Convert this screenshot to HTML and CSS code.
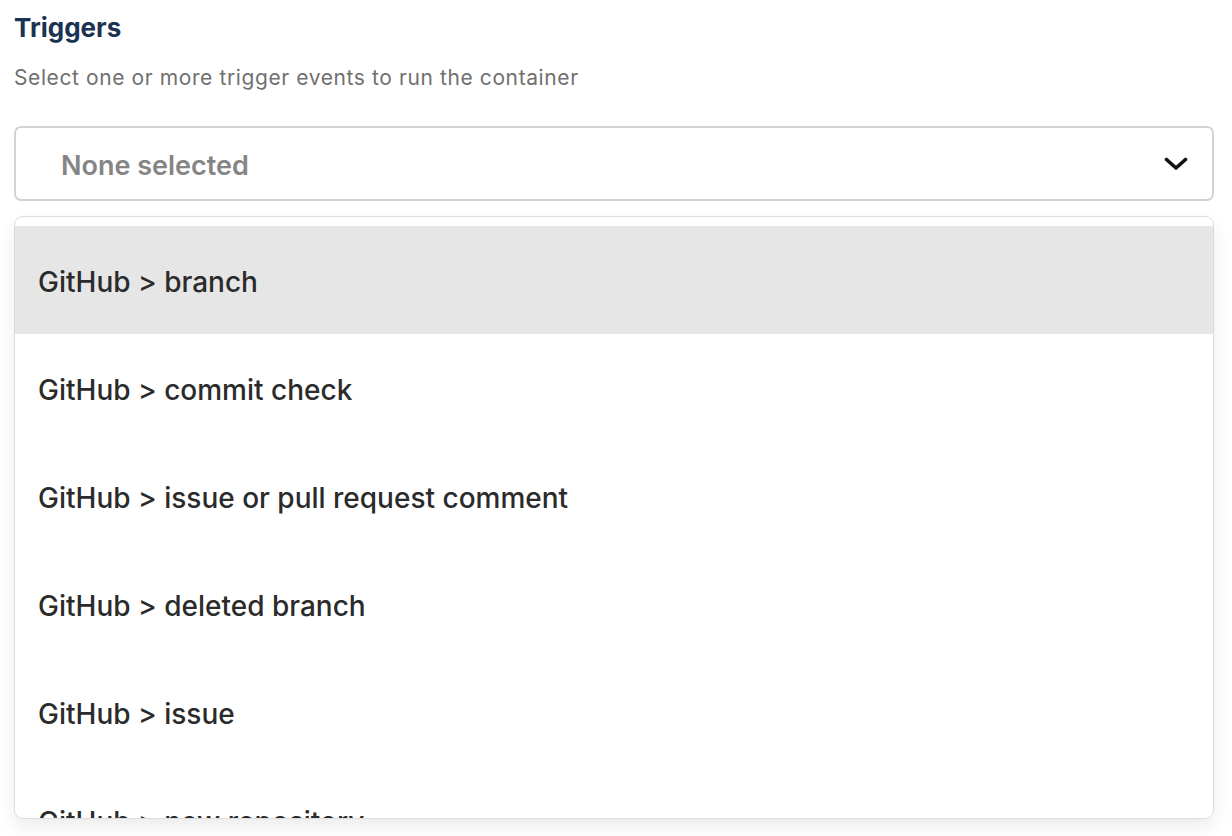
FILE: index.html
```html
<!DOCTYPE html>
<html>
<head>
<meta charset="utf-8">
<link rel="stylesheet" href="styles.css">
</head>
<body>
<div class="field">
  <h2 class="title">Triggers</h2>
  <p class="hint">Select one or more trigger events to run the container</p>
  <div class="select">
    <span class="placeholder">None selected</span>
    <svg class="chevron" width="24" height="16" viewBox="0 0 24 16"><path d="M2.5 3.5 L12 12 L21.5 3.5" fill="none" stroke="#111" stroke-width="3.6" stroke-linecap="round" stroke-linejoin="round"/></svg>
  </div>
  <div class="menu">
    <ul class="options">
      <li class="option active">GitHub &gt; branch</li>
      <li class="option">GitHub &gt; commit check</li>
      <li class="option">GitHub &gt; issue or pull request comment</li>
      <li class="option">GitHub &gt; deleted branch</li>
      <li class="option">GitHub &gt; issue</li>
      <li class="option">GitHub &gt; new repository</li>
    </ul>
  </div>
</div>
</body>
</html>
```
FILE: styles.css
```css
html, body {
  margin: 0;
  padding: 0;
  background: #fff;
}
body {
  font-family: Inter, "Noto Sans", sans-serif;
  width: 1232px;
  height: 836px;
  overflow: hidden;
}
.field {
  padding: 12px 18px 0 14px;
}
.title {
  margin: 0;
  font-size: 26px;
  font-weight: 700;
  color: #1b3352;
  line-height: 32px;
}
.hint {
  margin: 20px 0 0;
  font-size: 21px;
  letter-spacing: 0.6px;
  color: #707070;
  line-height: 28px;
}
.select {
  margin-top: 34px;
  height: 71px;
  border: 2px solid #d3d3d3;
  border-radius: 7px;
  display: flex;
  align-items: center;
  justify-content: space-between;
  padding: 0 24px 0 45px;
}
.placeholder {
  font-size: 27px;
  font-weight: 600;
  color: #858585;
  padding-top: 4px;
}
.chevron {
  display: block;
}
.menu {
  margin-top: 15px;
  height: 601px;
  border: 1px solid #dcdcdc;
  border-radius: 9px;
  box-shadow: 0 8px 18px rgba(0,0,0,0.08);
  overflow: hidden;
}
.options {
  list-style: none;
  margin: 0;
  padding: 9px 0 0;
}
.option {
  box-sizing: border-box;
  height: 108px;
  display: flex;
  align-items: center;
  padding: 4px 0 0 23px;
  font-size: 28px;
  font-weight: 500;
  color: #2b2b2b;
}
.option.active {
  background: #e6e6e6;
}
```
